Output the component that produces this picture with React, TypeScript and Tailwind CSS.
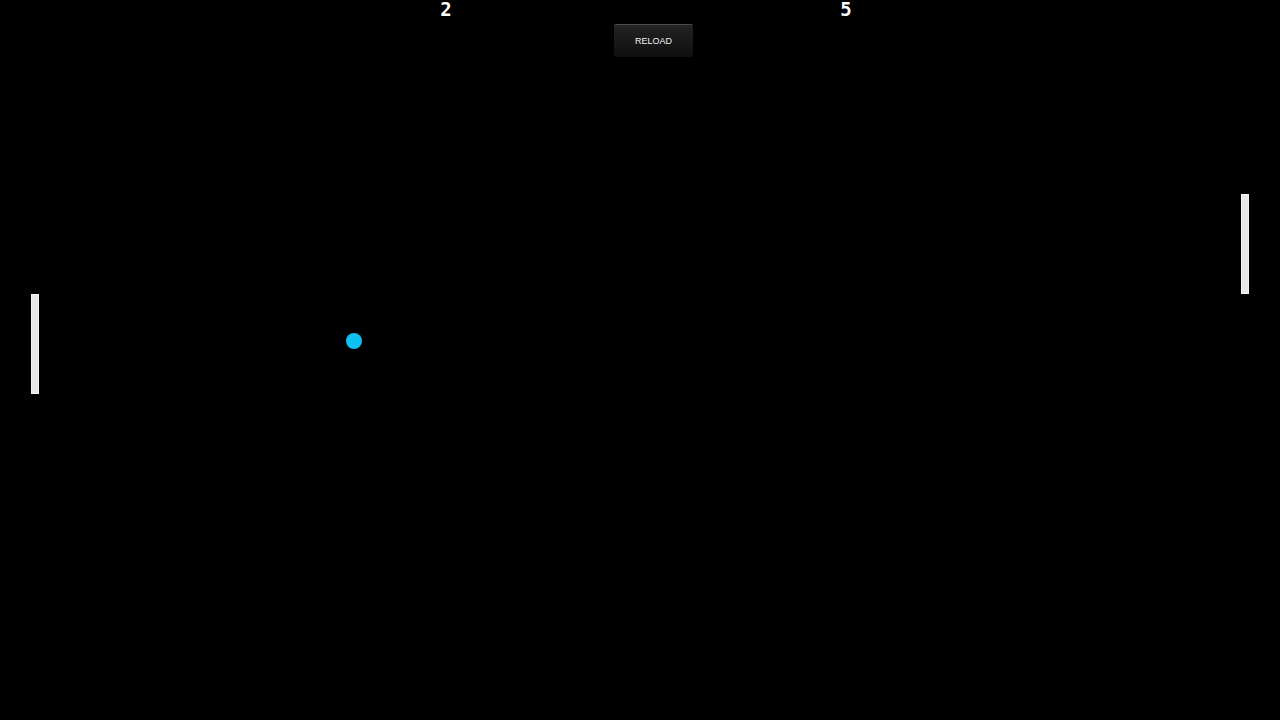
import React from 'react';

export default function App() {
    return (
        <div className="relative w-full h-[720px] bg-black overflow-hidden">

            {/* Scores */}
            <div
                className="absolute top-[2px] left-[436px] w-[20px] text-center text-white font-bold text-[19px] leading-[15px]"
                style={{ fontFamily: '"DejaVu Sans Mono", monospace' }}
            >
                2
            </div>
            <div
                className="absolute top-[2px] left-[836px] w-[20px] text-center text-white font-bold text-[19px] leading-[15px]"
                style={{ fontFamily: '"DejaVu Sans Mono", monospace' }}
            >
                5
            </div>

            {/* Reload button */}
            <button
                className="absolute top-[24px] left-[614px] w-[79px] h-[33px] pt-[2px] rounded-[2px] border-t border-[#4a4a4a] bg-gradient-to-b from-[#232323] to-[#0f0f0f] text-[#f0f0f0] text-[9px] shadow-[0_1px_2px_rgba(0,0,0,0.8)]"
                style={{ fontFamily: '"Liberation Sans", Arial, sans-serif' }}
            >
                RELOAD
            </button>

            {/* Paddles */}
            <div className="absolute left-[31px] top-[294px] w-[8px] h-[100px] bg-[#e8e8e8] border border-[#f6f6f6]" />
            <div className="absolute left-[1241px] top-[194px] w-[8px] h-[100px] bg-[#e8e8e8] border border-[#f6f6f6]" />

            {/* Ball */}
            <div className="absolute left-[346px] top-[333px] w-[16px] h-[16px] rounded-full bg-[#0fc0f2]" />
        </div>
    );
}
